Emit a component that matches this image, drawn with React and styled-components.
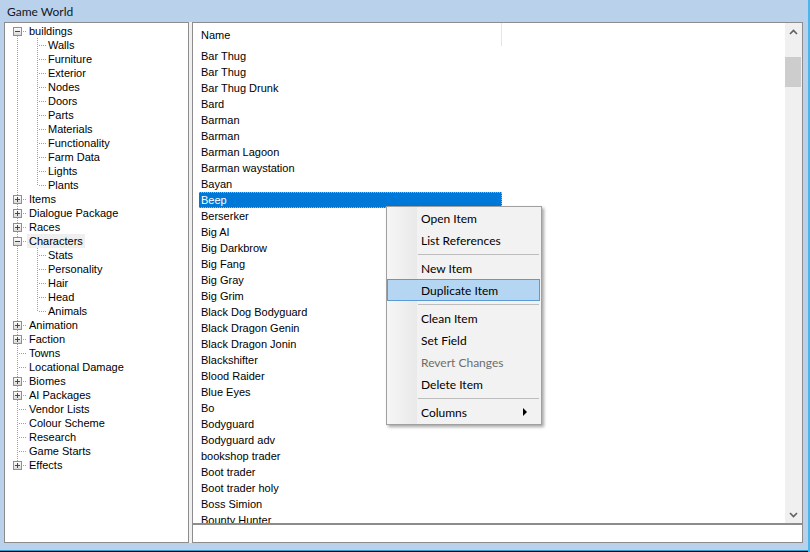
import React from 'react';
import styled, { createGlobalStyle } from 'styled-components';

const GlobalStyle = createGlobalStyle`
  html, body {
    margin: 0;
    padding: 0;
  }
  body {
    background: #b9d1ea;
    font-family: "Liberation Sans", Arial, sans-serif;
    font-size: 11px;
    color: #000;
  }
`;

const Window = styled.div`
  position: relative;
  width: 810px;
  height: 552px;
  box-sizing: border-box;
  display: flex;
  flex-direction: column;
  background: #b9d1ea;
  border-right: 2px solid #4fb4e8;
  overflow: hidden;
`;

const TitleBar = styled.div`
  height: 22px;
  flex: none;
  display: flex;
  align-items: center;
  padding-left: 7px;
  font-family: Lato, "Liberation Sans", sans-serif;
  font-size: 12px;
  color: #101828;
`;

const Body = styled.div`
  height: 521px;
  flex: none;
  display: flex;
  padding: 0 5px 0 4px;
`;

const BottomStrip = styled.div`
  height: 7px;
  flex: none;
  border-bottom: 1px solid #2d9fd3;
  box-shadow: 0 1px 0 #000;
`;

const Panel = styled.div`
  box-sizing: border-box;
  border: 1px solid #8c8c8c;
  background: #fff;
  overflow: hidden;
`;

const TreePanel = styled(Panel)`
  width: 185px;
  flex: none;
  padding: 1px 0 0 2px;
`;

const Splitter = styled.div`
  width: 3px;
  flex: none;
  background: #f0f0f0;
`;

const ListPanel = styled(Panel)`
  flex: 1;
  display: flex;
  flex-direction: column;
`;

/* ---------- tree ---------- */

const TreeRow = styled.div`
  height: 14px;
  display: flex;
  align-items: center;
  white-space: nowrap;
`;

const TreeLabel = styled.span`
  height: 14px;
  line-height: 14px;
  padding: 0 2px;
  margin-left: ${(p) => (p.$child ? '-1px' : '0')};
  background: ${(p) => (p.$selected ? '#efefef' : 'transparent')};
`;

const Glyph = styled.svg`
  display: block;
  flex: none;
`;

const DOT = '#a0a0a0';

function TreeCell({ top, bottom, box, horizontal }) {
  const mid = 7;
  return (
    <Glyph width="20" height="14" viewBox="0 0 20 14">
      {top && (
        <line x1="10.5" y1="0" x2="10.5" y2={box ? 3 : mid + 1} stroke={DOT} strokeDasharray="1 1" />
      )}
      {bottom && (
        <line x1="10.5" y1={box ? 12 : mid + 1} x2="10.5" y2="14" stroke={DOT} strokeDasharray="1 1" />
      )}
      {horizontal && (
        <line x1={box ? 16 : 12} y1="7.5" x2="20" y2="7.5" stroke={DOT} strokeDasharray="1 1" />
      )}
      {box && (
        <>
          <defs>
            <linearGradient id="bx" x1="0" y1="0" x2="0" y2="1">
              <stop offset="0" stopColor="#ffffff" />
              <stop offset="1" stopColor="#d8d8d8" />
            </linearGradient>
          </defs>
          <rect x="6.5" y="3.5" width="8" height="8" fill="url(#bx)" stroke="#8f8f8f" />
          <line x1="8" y1="7.5" x2="13" y2="7.5" stroke="#2a4a8c" />
          {box === 'plus' && <line x1="10.5" y1="5" x2="10.5" y2="10" stroke="#2a4a8c" />}
        </>
      )}
    </Glyph>
  );
}

const tree = [
  {
    label: 'buildings',
    children: ['Walls', 'Furniture', 'Exterior', 'Nodes', 'Doors', 'Parts', 'Materials', 'Functionality', 'Farm Data', 'Lights', 'Plants'],
  },
  { label: 'Items', closed: true },
  { label: 'Dialogue Package', closed: true },
  { label: 'Races', closed: true },
  { label: 'Characters', selected: true, children: ['Stats', 'Personality', 'Hair', 'Head', 'Animals'] },
  { label: 'Animation', closed: true },
  { label: 'Faction', closed: true },
  { label: 'Towns' },
  { label: 'Locational Damage' },
  { label: 'Biomes', closed: true },
  { label: 'AI Packages', closed: true },
  { label: 'Vendor Lists' },
  { label: 'Colour Scheme' },
  { label: 'Research' },
  { label: 'Game Starts' },
  { label: 'Effects', closed: true },
];

function Tree() {
  const rows = [];
  tree.forEach((node, i) => {
    const box = node.children ? 'minus' : node.closed ? 'plus' : null;
    rows.push(
      <TreeRow key={node.label}>
        <TreeCell top={i > 0} bottom={i < tree.length - 1} box={box} horizontal />
        <TreeLabel $selected={node.selected}>{node.label}</TreeLabel>
      </TreeRow>
    );
    (node.children || []).forEach((child, j) => {
      rows.push(
        <TreeRow key={node.label + child}>
          <TreeCell top bottom />
          <TreeCell top bottom={j < node.children.length - 1} horizontal />
          <TreeLabel $child>{child}</TreeLabel>
        </TreeRow>
      );
    });
  });
  return <TreePanel>{rows}</TreePanel>;
}

/* ---------- list ---------- */

const ListArea = styled.div`
  height: 500px;
  flex: none;
  display: flex;
`;

const ListBody = styled.div`
  flex: 1;
  overflow: hidden;
`;

const Header = styled.div`
  height: 25px;
  display: flex;
`;

const HeaderCell = styled.div`
  width: 309px;
  height: 23px;
  box-sizing: border-box;
  padding: 4px 0 0 8px;
  line-height: 16px;
  border-right: 1px solid #e5e5e5;
`;

const Row = styled.div`
  width: 303px;
  height: 16px;
  margin-left: 6px;
  box-sizing: border-box;
  padding-left: 2px;
  line-height: 14px;
  white-space: nowrap;
  border: 1px ${(p) => (p.$selected ? 'dotted #f4a23a' : 'solid transparent')};
  border-left-width: 0;
  background: ${(p) => (p.$selected ? '#0078d7' : 'transparent')};
  color: ${(p) => (p.$selected ? '#fff' : '#000')};
`;

const Scrollbar = styled.div`
  width: 17px;
  flex: none;
  background: #f0f0f0;
  display: flex;
  flex-direction: column;
`;

const ArrowButton = styled.div`
  height: 17px;
  flex: none;
  display: flex;
  align-items: center;
  justify-content: center;
`;

const Track = styled.div`
  flex: 1;
`;

const Thumb = styled.div`
  margin: 17px 1px 0 0;
  height: 30px;
  background: #cdcdcd;
`;

const Footer = styled.div`
  height: 17px;
  flex: none;
  border-top: 2px solid #8c8c8c;
  background: #fff;
`;

function Chevron({ down }) {
  return (
    <svg width="9" height="6" viewBox="0 0 9 6">
      <polyline
        points={down ? '1,1 4.5,4.5 8,1' : '1,5 4.5,1.5 8,5'}
        fill="none"
        stroke="#606060"
        strokeWidth="1.6"
      />
    </svg>
  );
}

const names = [
  'Bar Thug', 'Bar Thug', 'Bar Thug Drunk', 'Bard', 'Barman', 'Barman', 'Barman Lagoon',
  'Barman waystation', 'Bayan', 'Beep', 'Berserker', 'Big Al', 'Big Darkbrow', 'Big Fang',
  'Big Gray', 'Big Grim', 'Black Dog Bodyguard', 'Black Dragon Genin', 'Black Dragon Jonin',
  'Blackshifter', 'Blood Raider', 'Blue Eyes', 'Bo', 'Bodyguard', 'Bodyguard adv',
  'bookshop trader', 'Boot trader', 'Boot trader holy', 'Boss Simion', 'Bounty Hunter',
];

/* ---------- context menu ---------- */

const Menu = styled.div`
  position: absolute;
  left: 386px;
  top: 206px;
  width: 156px;
  box-sizing: border-box;
  border: 1px solid #a0a0a0;
  padding: 0 0 1px;
  background: linear-gradient(to right, #f6f6f6 0, #e9e9e9 30px, #f2f2f2 30px);
  box-shadow: 2px 2px 3px rgba(0, 0, 0, 0.35);
  font-family: Lato, "Liberation Sans", sans-serif;
  font-size: 12px;
`;

const MenuItem = styled.div`
  height: 22px;
  box-sizing: border-box;
  margin-right: 1px;
  padding: 0 12px 0 33px;
  display: flex;
  align-items: center;
  justify-content: space-between;
  border: 1px solid ${(p) => (p.$hover ? '#5c9ad6' : 'transparent')};
  background: ${(p) => (p.$hover ? '#b5d6f3' : 'transparent')};
  color: ${(p) => (p.$disabled ? '#6d6d6d' : '#000')};
`;

const MenuSeparator = styled.div`
  height: 6px;
  margin: 0 2px 0 31px;
  display: flex;
  align-items: center;

  &::after {
    content: '';
    flex: 1;
    border-top: 1px solid #bdbdbd;
  }
`;

const SubArrow = styled.span`
  width: 0;
  height: 0;
  border-left: 4px solid #000;
  border-top: 4px solid transparent;
  border-bottom: 4px solid transparent;
`;

function ContextMenu() {
  return (
    <Menu>
      <MenuItem>Open Item</MenuItem>
      <MenuItem>List References</MenuItem>
      <MenuSeparator />
      <MenuItem>New Item</MenuItem>
      <MenuItem $hover>Duplicate Item</MenuItem>
      <MenuSeparator />
      <MenuItem>Clean Item</MenuItem>
      <MenuItem>Set Field</MenuItem>
      <MenuItem $disabled>Revert Changes</MenuItem>
      <MenuItem>Delete Item</MenuItem>
      <MenuSeparator />
      <MenuItem>
        Columns
        <SubArrow />
      </MenuItem>
    </Menu>
  );
}

export default function App() {
  return (
    <>
      <GlobalStyle />
      <Window>
        <TitleBar>Game World</TitleBar>
        <Body>
          <Tree />
          <Splitter />
          <ListPanel>
            <ListArea>
              <ListBody>
                <Header>
                  <HeaderCell>Name</HeaderCell>
                </Header>
                {names.map((n, i) => (
                  <Row key={i} $selected={n === 'Beep'}>{n}</Row>
                ))}
              </ListBody>
              <Scrollbar>
                <ArrowButton><Chevron /></ArrowButton>
                <Track><Thumb /></Track>
                <ArrowButton><Chevron down /></ArrowButton>
              </Scrollbar>
            </ListArea>
            <Footer />
          </ListPanel>
        </Body>
        <BottomStrip />
        <ContextMenu />
      </Window>
    </>
  );
}
